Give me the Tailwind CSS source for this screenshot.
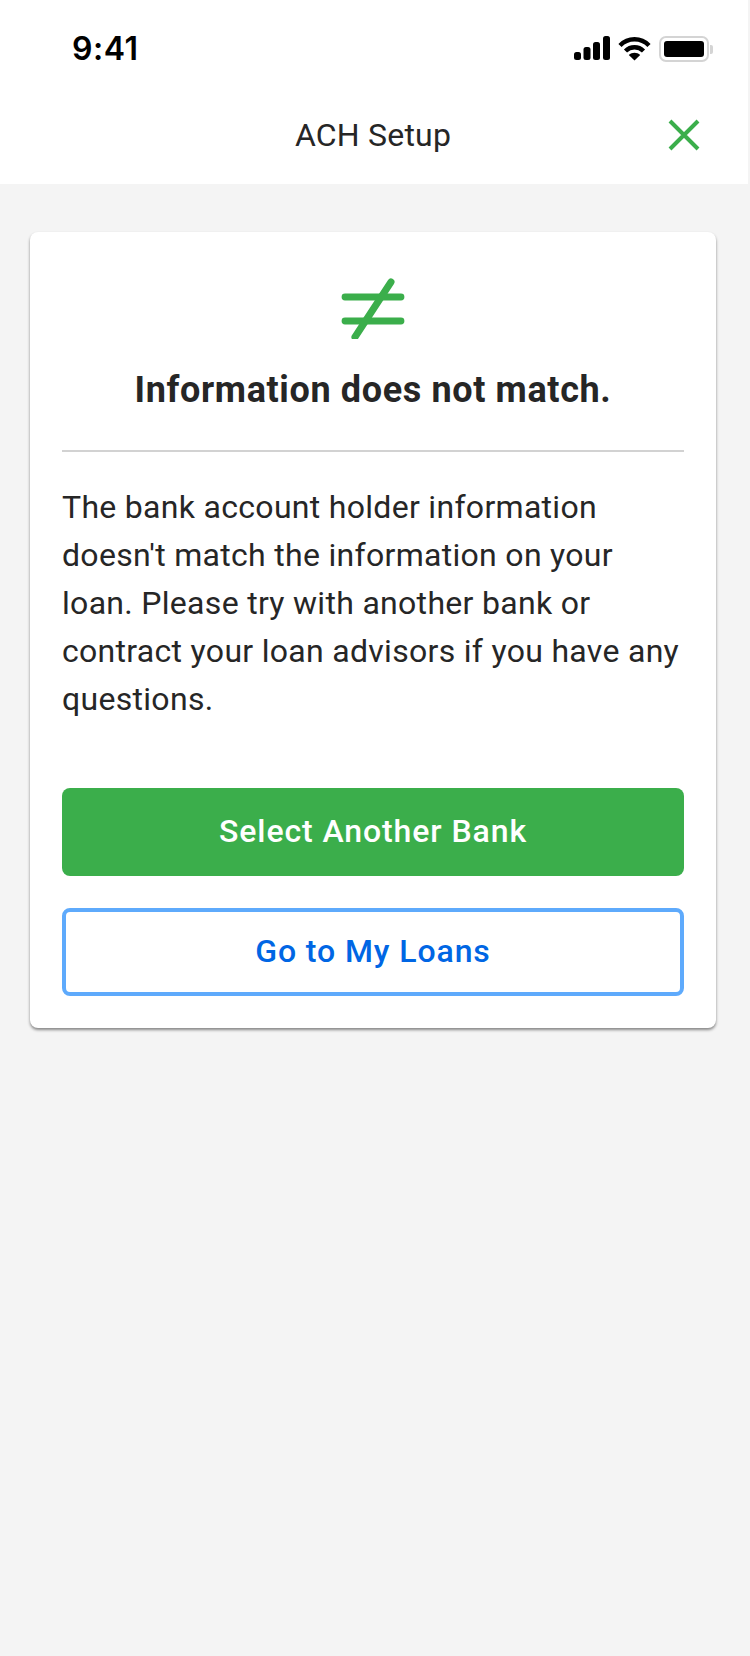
<!DOCTYPE html>
<html lang="en">
<head>
    <meta charset="UTF-8">
    <meta name="viewport" content="width=device-width, initial-scale=1.0">
    <title>ACH Setup</title>
    <script src="https://cdn.jsdelivr.net/npm/@tailwindcss/browser@4"></script>
</head>
<body class="bg-[#f4f4f4] w-[750px] h-[1656px] overflow-hidden font-['Roboto',sans-serif] text-[#262626]">

    <!-- Status bar + title bar -->
    <header class="bg-white h-[184px] w-[748px] pr-[2px]">
        <div class="h-[98px] pt-[29px] pl-[72px] pr-[33px] flex items-start justify-between">
            <span class="font-['Inter',sans-serif] font-semibold text-[32px] leading-[40px] tracking-[0.5px] text-black">9:41</span>
            <div class="flex items-start gap-[8px] pt-[7px]">
                <svg width="36" height="24" viewBox="0 0 36 24" fill="#000">
                    <rect x="0" y="16" width="7" height="8" rx="2.5"/>
                    <rect x="9.5" y="11" width="7" height="13" rx="2.5"/>
                    <rect x="19" y="6" width="7" height="18" rx="2.5"/>
                    <rect x="29" y="0" width="7" height="24" rx="2.5"/>
                </svg>
                <svg width="33" height="25" viewBox="0 0 33 25" fill="none" stroke="#000" stroke-width="4.4">
                    <path d="M2 9.5C10 1.2 23 1.2 31 9.5"/>
                    <path d="M7.5 15C12.5 10 20.5 10 25.5 15"/>
                    <path d="M16.5 24.5L10.8 19C14 16 19 16 22.2 19Z" fill="#000" stroke="none"/>
                </svg>
                <div class="flex items-center">
                    <div class="w-[50px] h-[26px] rounded-[7px] border-[2px] border-[#d4d4d4] p-[3px]">
                        <div class="w-full h-full rounded-[3px] bg-black"></div>
                    </div>
                    <div class="w-[3px] h-[9px] ml-[1px] rounded-r-[2px] bg-[#d4d4d4]"></div>
                </div>
            </div>
        </div>
        <div class="relative h-[74px] flex items-center justify-center">
            <h1 class="text-[32px] leading-[74px] tracking-[0.2px]">ACH Setup</h1>
            <svg class="absolute left-[668px] top-[21px]" width="32" height="32" viewBox="0 0 32 32" fill="none" stroke="#3bae4b" stroke-width="4">
                <path d="M2 2L30 30M30 2L2 30"/>
            </svg>
        </div>
    </header>

    <main class="w-[746px] px-[30px] pt-[48px]">
        <!-- Error card -->
        <section class="bg-white rounded-[8px] h-[796px] px-[32px] pt-[45px] shadow-[0_2px_3px_rgba(0,0,0,0.45)]">
            <svg class="mx-auto block" width="64" height="62" viewBox="0 0 64 62" fill="none" stroke="#3bae4b" stroke-linecap="round">
                <path d="M4 20H60M4 44H60" stroke-width="6.8"/>
                <path d="M50 5L14 60" stroke-width="7"/>
            </svg>
            <h2 class="text-center font-bold text-[36px] leading-[44px] tracking-[0.63px] mt-[29px]">Information does not match.</h2>
            <div class="h-[2px] bg-[#d2d2d2] mt-[38px]"></div>
            <p class="text-[32px] leading-[48px] tracking-[0.3px] mt-[31px]">The bank account holder information doesn't match the information on your loan. Please try with another bank or contract your loan advisors if you have any questions.</p>
            <div class="mt-[65px] flex flex-col gap-[32px]">
                <button class="h-[88px] pb-[2px] rounded-[8px] bg-[#3bae4b] text-white text-[32px] font-medium tracking-[0.9px]">Select Another Bank</button>
                <button class="h-[88px] pb-[2px] rounded-[8px] bg-white border-[4px] border-[#5eaafc] text-[#0066e4] text-[32px] font-medium tracking-[0.9px]">Go to My Loans</button>
            </div>
        </section>
    </main>
</body>
</html>
